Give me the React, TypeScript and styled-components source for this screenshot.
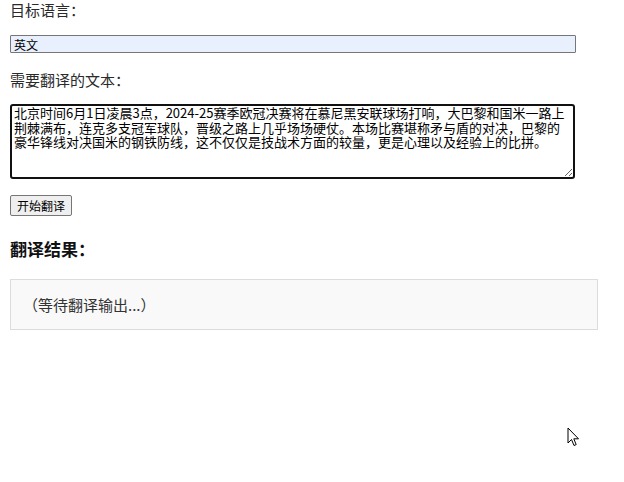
import React, { useState } from 'react';
import styled, { createGlobalStyle } from 'styled-components';

const GlobalStyle = createGlobalStyle`
    html, body {
        margin: 0;
        padding: 0;
        background: #fff;
    }
    body {
        font-family: 'Noto Sans CJK SC', 'Liberation Sans', sans-serif;
        color: #222;
    }
`;

const Page = styled.div`
    width: 588px;
    padding: 0 10px;
    display: flex;
    flex-direction: column;
    align-items: flex-start;
`;

type gapProps = {
    $top?: number;
};

const Label = styled.label<gapProps>`
    display: block;
    font-size: 15px;
    line-height: 20px;
    color: #2a2a2a;
    margin-top: ${(props) => props.$top ?? 0}px;
`;

const LangInput = styled.input`
    box-sizing: border-box;
    width: 566px;
    height: 18px;
    margin: 15px 0 0;
    padding: 0 3px;
    border: 1px solid #767676;
    border-radius: 1px;
    background: #e8f0fe;
    font-family: 'Noto Sans CJK SC', sans-serif;
    font-size: 12px;
    color: #000;
    outline: none;
`;

const SourceText = styled.textarea`
    display: block;
    box-sizing: border-box;
    width: 565px;
    height: 75px;
    margin: 14px 0 0;
    padding: 0 2px;
    border: 2px solid #111;
    border-radius: 3px;
    font-family: 'Noto Sans CJK SC', sans-serif;
    font-size: 13px;
    line-height: 14.5px;
    color: #000;
    resize: both;
    outline: none;
    overflow: hidden;
`;

const ActionButton = styled.button`
    margin-top: 16px;
    height: 21px;
    padding: 0 6px;
    border: 1px solid #767676;
    border-radius: 2px;
    background: #efefef;
    font-family: 'Noto Sans CJK SC', sans-serif;
    font-size: 12px;
    line-height: 19px;
    color: #000;
    cursor: pointer;
`;

const ResultTitle = styled.h3`
    margin: 21px 0 0;
    font-size: 17px;
    line-height: 24px;
    font-weight: 700;
    color: #111;
`;

const ResultBox = styled.div`
    box-sizing: border-box;
    width: 588px;
    height: 51px;
    margin-top: 18px;
    padding: 0 12px;
    display: flex;
    align-items: center;
    border: 1px solid #dcdcdc;
    background: #f9f9f9;
    font-size: 15px;
    color: #333;
`;

const Pointer = styled.svg`
    position: absolute;
    left: 567px;
    top: 427px;
    pointer-events: none;
`;

const sourceText =
    '北京时间6月1日凌晨3点，2024-25赛季欧冠决赛将在慕尼黑安联球场打响，大巴黎和国米一路上荆棘满布，连克多支冠军球队，晋级之路上几乎场场硬仗。本场比赛堪称矛与盾的对决，巴黎的豪华锋线对决国米的钢铁防线，这不仅仅是技战术方面的较量，更是心理以及经验上的比拼。';

const App = () => {
    const [lang, setLang] = useState('英文');
    const [text, setText] = useState(sourceText);

    return (
        <>
            <GlobalStyle />
            <Page>
                <Label>目标语言：</Label>
                <LangInput value={lang} onChange={(e) => setLang(e.target.value)} />
                <Label $top={17}>需要翻译的文本：</Label>
                <SourceText value={text} onChange={(e) => setText(e.target.value)} />
                <ActionButton>开始翻译</ActionButton>
                <ResultTitle>翻译结果：</ResultTitle>
                <ResultBox>（等待翻译输出...）</ResultBox>
            </Page>
            <Pointer width="14" height="21" viewBox="0 0 14 21">
                <path
                    d="M1 1 L1 16 L4.5 12.5 L7 18.5 L9.2 17.6 L6.8 11.8 L11.5 11.8 Z"
                    fill="#fff"
                    stroke="#000"
                    strokeWidth="1"
                    strokeLinejoin="round"
                />
            </Pointer>
        </>
    );
};

export default App;
